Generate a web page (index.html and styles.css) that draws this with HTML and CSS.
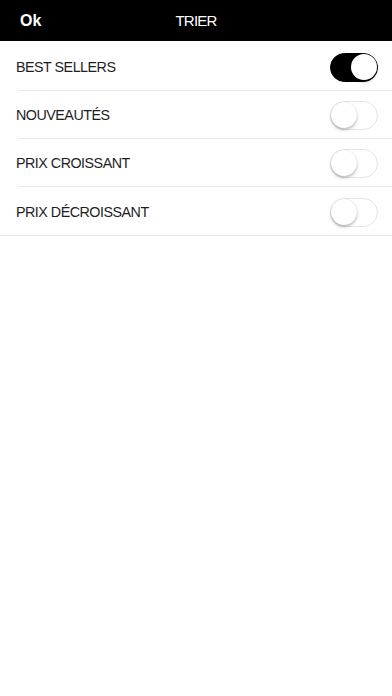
FILE: index.html
```html
<!DOCTYPE html>
<html lang="fr">
<head>
<meta charset="utf-8">
<title>Trier</title>
<link rel="stylesheet" href="styles.css">
</head>
<body>
<header class="bar">
  <span class="bar-ok">Ok</span>
  <span class="bar-title">TRIER</span>
  <span class="bar-spacer"></span>
</header>
<ul class="list">
  <li class="row"><span class="label">BEST SELLERS</span><span class="switch on"><span class="knob"></span></span></li>
  <li class="row"><span class="label">NOUVEAUTÉS</span><span class="switch"><span class="knob"></span></span></li>
  <li class="row"><span class="label">PRIX CROISSANT</span><span class="switch"><span class="knob"></span></span></li>
  <li class="row last"><span class="label">PRIX DÉCROISSANT</span><span class="switch"><span class="knob"></span></span></li>
</ul>
</body>
</html>
```
FILE: styles.css
```css
html, body {
  margin: 0;
  padding: 0;
  background: #fff;
  font-family: "Liberation Sans", Arial, Helvetica, sans-serif;
}
.bar {
  height: 41px;
  background: #000;
  color: #fff;
  display: grid;
  grid-template-columns: 1fr auto 1fr;
  align-items: center;
  padding: 0 20px;
}
.bar-ok {
  font-weight: bold;
  font-size: 16px;
  justify-self: start;
}
.bar-title {
  font-size: 15px;
  letter-spacing: -0.8px;
  justify-self: center;
}
.list {
  list-style: none;
  margin: 0;
  padding: 1.5px 0 0;
}
.row {
  position: relative;
  height: 48.33px;
  box-sizing: border-box;
  display: flex;
  align-items: center;
  justify-content: space-between;
  padding: 0 14px 0 16px;
}
.row::after {
  content: "";
  position: absolute;
  left: 19px;
  right: 0;
  bottom: 0;
  height: 1px;
  background: #e8e8e8;
}
.row.last::after {
  left: 0;
}
.label {
  font-size: 14.3px;
  letter-spacing: -0.5px;
  color: #1e1e1e;
}
.switch {
  position: relative;
  width: 48px;
  height: 29px;
  box-sizing: border-box;
  border-radius: 15px;
  border: 1.5px solid #e4e4e4;
  background: #fff;
  margin-top: 1px;
}
.switch.on {
  background: #000;
  border-color: #000;
}
.knob {
  position: absolute;
  top: 0;
  left: 0;
  width: 26px;
  height: 26px;
  border-radius: 50%;
  background: #fff;
  box-shadow: 0 2px 3px rgba(0,0,0,0.25), 0 0 1px rgba(0,0,0,0.2);
}
.switch.on .knob {
  left: auto;
  right: 0;
}
```
